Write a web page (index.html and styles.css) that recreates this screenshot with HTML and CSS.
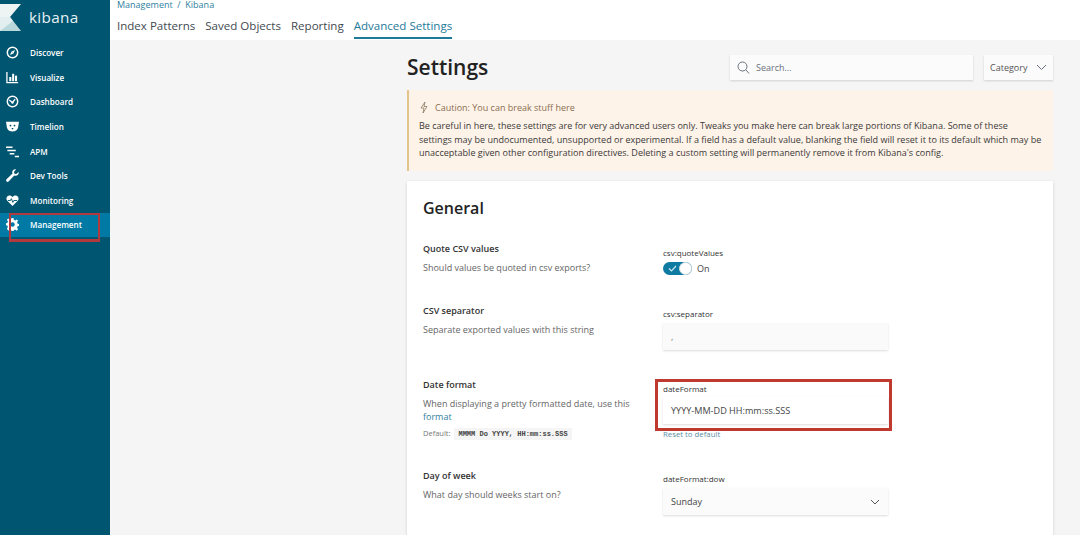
FILE: index.html
```html
<!DOCTYPE html>
<html lang="en">
<head>
  <meta charset="UTF-8">
  <title>Settings - Kibana</title>
  <link rel="stylesheet" href="styles.css">
</head>
<body>
  <aside class="sidebar">
    <div class="logo">
      <svg class="logo-mark" width="21" height="27" viewBox="0 0 21 27">
        <polygon points="0,0 21,0 10,13 0,13" fill="#eef3f3"/>
        <polygon points="0,13 10,13 21,27 0,27" fill="#b9d8dc"/>
        <polygon points="0,13 10,13 13,17 0,27" fill="#e2eeef"/>
      </svg>
      <span class="logo-text">kibana</span>
    </div>
    <nav class="side-nav">
      <a class="side-item">
        <svg width="13" height="13" viewBox="0 0 14 14"><circle cx="7" cy="7" r="5.6" fill="none" stroke="#fff" stroke-width="1.6"/><polygon points="9.8,4.2 8,8 6,6" fill="#fff"/><polygon points="4.2,9.8 6,6 8,8" fill="#fff"/></svg>
        <span>Discover</span>
      </a>
      <a class="side-item">
        <svg width="13" height="13" viewBox="0 0 14 14"><path d="M1 1v11.5h12" fill="none" stroke="#fff" stroke-width="1.4"/><rect x="3.5" y="6.5" width="2.2" height="4.5" fill="#fff"/><rect x="6.6" y="3" width="2.2" height="8" fill="#fff"/><rect x="9.7" y="5" width="2.2" height="6" fill="#fff"/></svg>
        <span>Visualize</span>
      </a>
      <a class="side-item">
        <svg width="13" height="13" viewBox="0 0 14 14"><circle cx="7" cy="7" r="5.6" fill="none" stroke="#fff" stroke-width="1.6"/><path d="M3.6 5.5L7 8l2.8-3.4" fill="none" stroke="#fff" stroke-width="1.4"/><circle cx="7" cy="8.2" r="1.3" fill="#fff"/></svg>
        <span>Dashboard</span>
      </a>
      <a class="side-item">
        <svg width="13" height="13" viewBox="0 0 14 14"><path d="M0 2h14l-1 6c-.5 2.500-3 4.500-6 4.500S1.500 10.500 1 8z" fill="#fff"/><circle cx="4.800" cy="6" r="1" fill="#005571"/><circle cx="9.200" cy="6" r="1" fill="#005571"/><path d="M5.800 8.500h2.400L7 10.500z" fill="#005571"/></svg>
        <span>Timelion</span>
      </a>
      <a class="side-item">
        <svg width="13" height="13" viewBox="0 0 14 14"><path d="M0 2.500h7M1.500 6h9M4 9.500h5M9.500 12.500h4.500" fill="none" stroke="#fff" stroke-width="1.600"/></svg>
        <span>APM</span>
      </a>
      <a class="side-item">
        <svg width="13" height="13" viewBox="0 0 14 14"><path d="M13.600 3.200l-2.500 2.300-2-.5-.5-2L11 .4C9 -.2 6.800 1 6.700 3.300c0 .7.1 1.200.3 1.600L.6 11c-.8.8-.6 1.800 0 2.400.7.6 1.600.7 2.400-.1l6-6.200c2.600 1 5.300-1.200 4.600-3.900z" fill="#fff"/></svg>
        <span>Dev Tools</span>
      </a>
      <a class="side-item">
        <svg width="13" height="13" viewBox="0 0 14 14"><path d="M7 13L1.300 7.200C-.5 5.200 .8 1.500 3.800 1.500 5.200 1.500 6.300 2.200 7 3.200 7.700 2.200 8.800 1.500 10.200 1.500c3 0 4.300 3.700 2.500 5.700z" fill="#fff"/><path d="M2 7h2.800l1-2 1.600 4 1-2H12" fill="none" stroke="#005571" stroke-width="1"/></svg>
        <span>Monitoring</span>
      </a>
      <a class="side-item active">
        <svg width="13" height="13" viewBox="0 0 14 14"><path d="M6 0h2l.4 2 1.500.7 1.700-1.100 1.400 1.400-1.100 1.700.7 1.500 2 .4v2l-2 .4-.7 1.500 1.100 1.700-1.400 1.400-1.700-1.100-1.500.7-.4 2H6l-.4-2-1.500-.7-1.700 1.100L1 11.400l1.100-1.700-.7-1.500-2-.4v-2l2-.4.7-1.500L1 2l1.400-1.400 1.700 1.100 1.500-.7z" fill="#fff"/><circle cx="7" cy="7" r="2.400" fill="#0079a5"/></svg>
        <span>Management</span>
      </a>
    </nav>
    <div class="mark mark-nav"></div>
  </aside>

  <div class="page">
    <header class="topbar">
      <div class="crumbs">Management&nbsp; / &nbsp;Kibana</div>
      <div class="tabs">
        <a class="tab">Index Patterns</a>
        <a class="tab">Saved Objects</a>
        <a class="tab">Reporting</a>
        <a class="tab selected">Advanced Settings</a>
      </div>
    </header>

    <main class="content">
      <div class="head-row">
        <h1>Settings</h1>
        <div class="search">
          <svg width="13" height="13" viewBox="0 0 13 13"><circle cx="5.500" cy="5.500" r="4.500" fill="none" stroke="#69707d" stroke-width="1"/><path d="M9 9l3 3.500" stroke="#69707d" stroke-width="1"/></svg>
          <span>Search...</span>
        </div>
        <div class="category">
          <span>Category</span>
          <svg width="11" height="7" viewBox="0 0 11 7"><path d="M1 1l4.500 4.500L10 1" fill="none" stroke="#69707d" stroke-width="1"/></svg>
        </div>
      </div>

      <section class="callout">
        <div class="callout-title">
          <svg width="8" height="11" viewBox="0 0 8 11"><path d="M5 0L1 6h3l-1 5 4-6.500H4z" fill="none" stroke="#8a7a66" stroke-width=".8"/></svg>
          <span>Caution: You can break stuff here</span>
        </div>
        <p>Be careful in here, these settings are for very advanced users only. Tweaks you make here can break large portions of Kibana. Some of these settings may be undocumented, unsupported or experimental. If a field has a default value, blanking the field will reset it to its default which may be unacceptable given other configuration directives. Deleting a custom setting will permanently remove it from Kibana's config.</p>
      </section>

      <section class="panel">
        <h2>General</h2>

        <div class="row row-quote">
          <div class="info">
            <h3>Quote CSV values</h3>
            <p>Should values be quoted in csv exports?</p>
          </div>
          <div class="field">
            <label>csv:quoteValues</label>
            <div class="switch-line">
              <span class="switch">
                <svg width="9" height="7" viewBox="0 0 9 7"><path d="M1 3.500L3.500 6 8 1" fill="none" stroke="#cfe6ef" stroke-width="1.200"/></svg>
                <i class="knob"></i>
              </span>
              <span class="switch-label">On</span>
            </div>
          </div>
        </div>

        <div class="row row-sep">
          <div class="info">
            <h3>CSV separator</h3>
            <p>Separate exported values with this string</p>
          </div>
          <div class="field">
            <label>csv:separator</label>
            <div class="input input-sep">,</div>
          </div>
        </div>

        <div class="row row-date">
          <div class="info">
            <h3>Date format</h3>
            <p>When displaying a pretty formatted date, use this <a class="link">format</a></p>
            <div class="default">Default: <code>MMMM Do YYYY, HH:mm:ss.SSS</code></div>
          </div>
          <div class="field">
            <label>dateFormat</label>
            <div class="input input-date">YYYY-MM-DD HH:mm:ss.SSS</div>
            <a class="reset">Reset to default</a>
            <div class="mark mark-date"></div>
          </div>
        </div>

        <div class="row row-dow">
          <div class="info">
            <h3>Day of week</h3>
            <p>What day should weeks start on?</p>
          </div>
          <div class="field">
            <label>dateFormat:dow</label>
            <div class="input input-select">
              <span>Sunday</span>
              <svg width="10" height="6" viewBox="0 0 10 6"><path d="M1 1l4 4 4-4" fill="none" stroke="#555" stroke-width="1"/></svg>
            </div>
          </div>
        </div>
      </section>
    </main>
  </div>
</body>
</html>
```

FILE: styles.css
```css
* {
  box-sizing: border-box;
}

body {
  margin: 0;
  display: flex;
  height: 535px;
  overflow: hidden;
  font-family: "Open Sans", sans-serif;
  background: #f5f5f5;
  color: #333;
}

/* sidebar */
.sidebar {
  position: relative;
  width: 110px;
  flex: none;
  background: #005571;
  color: #fff;
}

.logo {
  display: flex;
  align-items: flex-start;
  height: 40.5px;
  padding-top: 4px;
}

.logo-text {
  margin: 2px 0 0 8px;
  font-size: 15.300px;
  line-height: 22px;
  letter-spacing: 0.3px;
  color: #e8f1f3;
}

.side-item {
  display: flex;
  align-items: center;
  height: 24.600px;
  padding-left: 6px;
  font-size: 8.100px;
  font-weight: 600;
}

.side-item svg {
  flex: none;
  margin-right: 11px;
}

.side-item.active {
  background: #0079a5;
}

/* red annotations drawn on the screenshot */
.mark {
  position: absolute;
  border: 2px solid #b23a3f;
  pointer-events: none;
}

.mark-nav {
  left: 9px;
  top: 213px;
  width: 91px;
  height: 29px;
  border-bottom-width: 3px;
}

.mark-date {
  left: -8px;
  top: 3px;
  width: 237px;
  height: 52px;
  border: 3px solid #c0392f;
}

/* top bar */
.page {
  flex: 1;
  min-width: 0;
}

.topbar {
  height: 40px;
  padding-left: 7px;
  background: #fff;
}

.crumbs {
  height: 11px;
  font-size: 9px;
  line-height: 9px;
  color: #2f7f9e;
}

.tabs {
  display: flex;
  gap: 10px;
  height: 29px;
}

.tab {
  height: 28px;
  padding-top: 6px;
  font-size: 11.550px;
  line-height: 17px;
  color: #3f4a50;
}

.tab.selected {
  color: #1f7a99;
  border-bottom: 2px solid #1f7a99;
}

/* settings column */
.content {
  width: 646px;
  margin-left: 297px;
}

.head-row {
  display: flex;
  align-items: center;
  height: 50px;
  padding-top: 4px;
}

h1 {
  flex: 1;
  margin: 0;
  font-size: 21px;
  font-weight: 600;
  color: #222;
}

.search, .category {
  display: flex;
  align-items: center;
  height: 25px;
  background: #fbfbfb;
  box-shadow: 0 1px 2px rgba(0, 0, 0, 0.15);
  font-size: 9px;
  color: #69707d;
}

.search {
  width: 243px;
  padding-left: 7px;
}

.search svg {
  margin-right: 6px;
}

.category {
  width: 69px;
  margin-left: 11px;
  padding: 0 6px;
  justify-content: space-between;
  color: #555;
}

.callout {
  height: 81px;
  padding: 11px 11px 0 10px;
  background: #fef3e8;
  border-left: 2px solid #e5c58c;
  font-size: 9px;
  line-height: 13.500px;
}

.callout-title {
  display: flex;
  align-items: center;
  gap: 7px;
  height: 13px;
  padding-left: 1px;
  color: #8a6d52;
}

.callout p {
  margin: 5px 0 0;
  font-size: 9.040px;
  color: #3a3a3a;
}

/* general panel */
.panel {
  height: 400px;
  margin-top: 10px;
  padding: 0 16px;
  background: #fff;
  box-shadow: 0 1px 3px rgba(0, 0, 0, 0.15);
}

h2 {
  margin: 0;
  padding-top: 16px;
  height: 59px;
  font-size: 16px;
  line-height: 22px;
  font-weight: 600;
  color: #222;
}

.row {
  display: flex;
}

.row-quote { height: 62px; }
.row-sep { height: 74px; }
.row-date { height: 91px; }

.info {
  width: 240px;
  flex: none;
  padding: 2px 20px 0 0;
}

h3 {
  margin: 0 0 6px;
  font-size: 9px;
  line-height: 13px;
  font-weight: 600;
  color: #333;
}

.info p {
  margin: 0;
  font-size: 9px;
  line-height: 13px;
  color: #666;
}

.link {
  color: #2f7f9e;
}

.default {
  margin-top: 5px;
  font-size: 7.500px;
  color: #777;
}

code {
  margin-left: 2px;
  padding: 2px 4px;
  font-family: "Liberation Mono", monospace;
  font-size: 7px;
  font-weight: 700;
  color: #444;
  background: #f5f5f5;
}

.field {
  position: relative;
  width: 225px;
  padding-top: 5px;
  font-size: 9px;
}

.row-quote .field, .row-date .field {
  padding-top: 6px;
}

.field label {
  display: block;
  height: 13px;
  font-size: 8px;
  line-height: 13px;
  color: #333;
}

.switch-line {
  display: flex;
  align-items: center;
  gap: 5px;
  margin-top: 3px;
}

.switch {
  position: relative;
  display: flex;
  align-items: center;
  width: 29px;
  height: 13px;
  padding-left: 5px;
  border-radius: 7px;
  background: #0f7ba3;
}

.knob {
  position: absolute;
  right: 0;
  top: 0;
  width: 13px;
  height: 13px;
  border-radius: 50%;
  background: #fff;
  border: 1px solid #d5dde0;
}

.switch-label {
  color: #444;
}

.input {
  display: flex;
  align-items: center;
  height: 27px;
  margin-top: 3px;
  padding: 0 8px;
  background: #fafafa;
  box-shadow: 0 1px 2px rgba(0, 0, 0, 0.14);
  color: #444;
}

.input-sep {
  color: #777;
}

.input-date {
  margin-top: 2px;
  background: #fff;
  font-size: 9.100px;
}

.input-select {
  justify-content: space-between;
  background: #fbfbfb;
}

.reset {
  display: block;
  margin-top: 5px;
  font-size: 7.800px;
  line-height: 10px;
  color: #5b8ea3;
}
```
